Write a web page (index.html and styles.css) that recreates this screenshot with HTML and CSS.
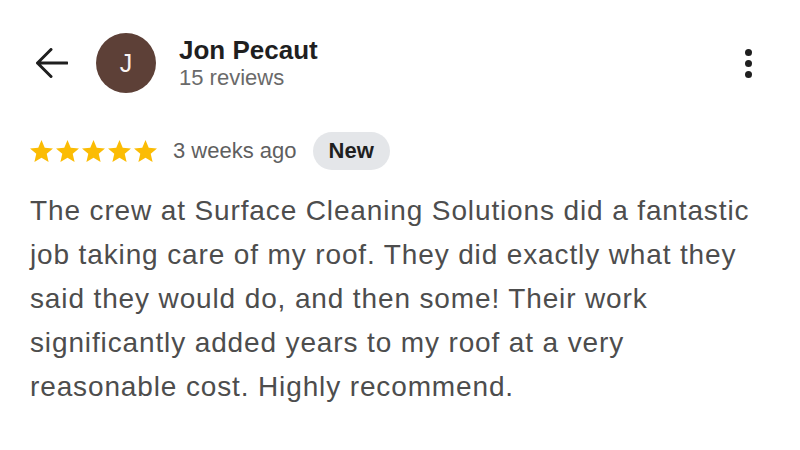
FILE: index.html
```html
<!DOCTYPE html>
<html lang="en">
<head>
    <meta charset="UTF-8">
    <meta name="viewport" content="width=device-width, initial-scale=1.0">
    <title>Review</title>
    <link rel="stylesheet" href="styles.css">
</head>
<body>
    <div class="review">
        <!-- Header: back, avatar, reviewer -->
        <div class="header">
            <button class="back" aria-label="Back">
                <svg width="32" height="30" viewBox="0 0 32 30">
                    <path d="M1.5 15H31M15 1.5L1.5 15L15 28.5" fill="none" stroke="#1f1f1f" stroke-width="3" stroke-linecap="round" stroke-linejoin="round"/>
                </svg>
            </button>
            <div class="avatar">J</div>
            <div class="reviewer">
                <div class="name">Jon Pecaut</div>
                <div class="count">15 reviews</div>
            </div>
            <button class="more" aria-label="More">
                <span class="dot"></span>
                <span class="dot"></span>
                <span class="dot"></span>
            </button>
        </div>

        <!-- Rating row -->
        <div class="rating">
            <div class="stars">
                <svg class="star" viewBox="2 2 20 19"><path d="M12 17.27L18.18 21l-1.64-7.03L22 9.24l-7.19-.61L12 2 9.19 8.63 2 9.24l5.46 4.73L5.820 21z"/></svg>
                <svg class="star" viewBox="2 2 20 19"><path d="M12 17.27L18.18 21l-1.64-7.03L22 9.24l-7.19-.61L12 2 9.19 8.63 2 9.24l5.46 4.73L5.82 21z"/></svg>
                <svg class="star" viewBox="2 2 20 19"><path d="M12 17.27L18.18 21l-1.64-7.03L22 9.24l-7.19-.61L12 2 9.19 8.63 2 9.24l5.46 4.73L5.82 21z"/></svg>
                <svg class="star" viewBox="2 2 20 19"><path d="M12 17.27L18.18 21l-1.64-7.03L22 9.24l-7.19-.61L12 2 9.19 8.63 2 9.24l5.46 4.73L5.82 21z"/></svg>
                <svg class="star" viewBox="2 2 20 19"><path d="M12 17.27L18.18 21l-1.64-7.03L22 9.24l-7.19-.61L12 2 9.19 8.63 2 9.24l5.46 4.73L5.82 21z"/></svg>
            </div>
            <span class="date">3 weeks ago</span>
            <span class="badge">New</span>
        </div>

        <p class="text">The crew at Surface Cleaning Solutions did a fantastic job taking care of my roof. They did exactly what they said they would do, and then some! Their work significantly added years to my roof at a very reasonable cost. Highly recommend.</p>
    </div>
</body>
</html>
```

FILE: styles.css
```css
body {
    margin: 0;
    background-color: #fff;
    font-family: 'Liberation Sans', Arial, sans-serif;
    color: #1f1f1f;
}
.review {
    padding: 33px 30px 0 30px;
}
.header {
    display: flex;
    align-items: center;
    height: 60px;
}
.back {
    display: flex;
    border: none;
    background: none;
    padding: 0;
    margin-left: 6px;
    cursor: pointer;
}
.avatar {
    width: 60px;
    height: 60px;
    border-radius: 50%;
    background-color: #5d4037;
    color: #fbf5f3;
    font-size: 25px;
    display: flex;
    align-items: center;
    justify-content: center;
    margin-left: 28px;
}
.reviewer {
    margin-left: 23px;
}
.name {
    font-size: 26px;
    font-weight: bold;
    line-height: 30px;
}
.count {
    font-size: 22px;
    line-height: 26px;
    color: #6a6a6a;
}
.more {
    margin-left: auto;
    margin-right: 18px;
    display: flex;
    flex-direction: column;
    gap: 4px;
    border: none;
    background: none;
    padding: 0;
    cursor: pointer;
}
.dot {
    width: 7px;
    height: 7px;
    border-radius: 50%;
    background-color: #1f1f1f;
}
.rating {
    display: flex;
    align-items: center;
    margin-top: 39px;
}
.stars {
    display: flex;
    gap: 3px;
}
.star {
    width: 23px;
    height: 22px;
    fill: #fbbc04;
}
.date {
    font-size: 22px;
    line-height: 26px;
    color: #5f5f5f;
    margin-left: 16px;
}
.badge {
    margin-left: 16px;
    height: 38px;
    line-height: 38px;
    padding: 0 16px;
    border-radius: 19px;
    background-color: #e4e6e9;
    font-size: 22px;
    font-weight: bold;
    color: #1f1f1f;
}
.text {
    margin: 19px 0 0 0;
    font-size: 28px;
    line-height: 44px;
    letter-spacing: 0.87px;
    color: #4d4d4d;
}
```
